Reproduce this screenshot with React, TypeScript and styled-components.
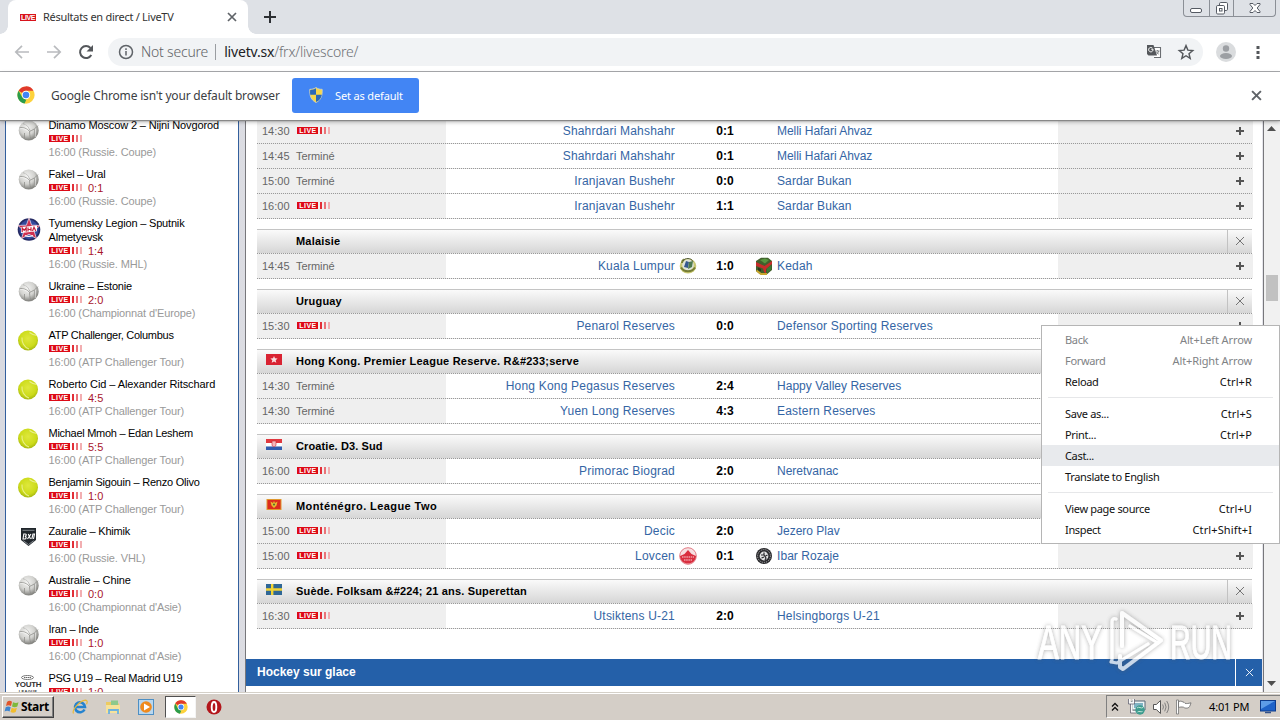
import React from 'react';
import styled, { createGlobalStyle } from 'styled-components';

const UI = `'Noto Sans', 'Open Sans', sans-serif`;
const ARIAL = `'Liberation Sans', Arial, sans-serif`;

const Global = createGlobalStyle`
  * { box-sizing: border-box; }
  html, body { margin: 0; padding: 0; }
  body { width: 1280px; height: 720px; overflow: hidden; background: #fff; }
  svg { display: block; flex: none; }
`;

/* ---------- data ---------- */

type Sport = 'volley' | 'tennis' | 'mhl' | 'vhl' | 'youth';
interface LiveEvent { icon: Sport; title: string; score?: string; meta: string; track?: number }

const events: LiveEvent[] = [
  { icon: 'volley', title: 'Dinamo Moscow 2 – Nijni Novgorod', meta: '16:00 (Russie. Coupe)', track: -0.14 },
  { icon: 'volley', title: 'Fakel – Ural', score: '0:1', meta: '16:00 (Russie. Coupe)', track: -0.2 },
  { icon: 'mhl', title: 'Tyumensky Legion – Sputnik Almetyevsk', score: '1:4', meta: '16:00 (Russie. MHL)', track: -0.18 },
  { icon: 'volley', title: 'Ukraine – Estonie', score: '2:0', meta: "16:00 (Championnat d'Europe)", track: -0.2 },
  { icon: 'tennis', title: 'ATP Challenger, Columbus', meta: '16:00 (ATP Challenger Tour)', track: -0.27 },
  { icon: 'tennis', title: 'Roberto Cid – Alexander Ritschard', score: '4:5', meta: '16:00 (ATP Challenger Tour)' },
  { icon: 'tennis', title: 'Michael Mmoh – Edan Leshem', score: '5:5', meta: '16:00 (ATP Challenger Tour)', track: -0.28 },
  { icon: 'tennis', title: 'Benjamin Sigouin – Renzo Olivo', score: '1:0', meta: '16:00 (ATP Challenger Tour)', track: -0.22 },
  { icon: 'vhl', title: 'Zauralie – Khimik', meta: '16:00 (Russie. VHL)', track: -0.2 },
  { icon: 'volley', title: 'Australie – Chine', score: '0:0', meta: "16:00 (Championnat d'Asie)" },
  { icon: 'volley', title: 'Iran – Inde', score: '1:0', meta: "16:00 (Championnat d'Asie)", track: -0.2 },
  { icon: 'youth', title: 'PSG U19 – Real Madrid U19', score: '1:0', meta: '16:00 (UEFA Youth League)', track: -0.3 },
];

type Crest = 'kl' | 'kedah' | 'lovcen' | 'ibar';
interface Match { time: string; live?: boolean; home: string; score: string; away: string; hc?: Crest; ac?: Crest; track?: number }
interface League { name?: string; track?: number; flag?: 'hk' | 'hr' | 'me' | 'se'; matches: Match[] }

const leagues: League[] = [
  {
    matches: [
      { time: '14:30', live: true, home: 'Shahrdari Mahshahr', score: '0:1', away: 'Melli Hafari Ahvaz', track: -0.04 },
      { time: '14:45', home: 'Shahrdari Mahshahr', score: '0:1', away: 'Melli Hafari Ahvaz', track: -0.04 },
      { time: '15:00', home: 'Iranjavan Bushehr', score: '0:0', away: 'Sardar Bukan', track: 0.1 },
      { time: '16:00', live: true, home: 'Iranjavan Bushehr', score: '1:1', away: 'Sardar Bukan', track: 0.1 },
    ],
  },
  { name: 'Malaisie', matches: [{ time: '14:45', home: 'Kuala Lumpur', score: '1:0', away: 'Kedah', hc: 'kl', ac: 'kedah' }] },
  { name: 'Uruguay', matches: [{ time: '15:30', live: true, home: 'Penarol Reserves', score: '0:0', away: 'Defensor Sporting Reserves' }] },
  {
    name: 'Hong Kong. Premier League Reserve. R&#233;serve',
    flag: 'hk',
    track: 0.22,
    matches: [
      { time: '14:30', home: 'Hong Kong Pegasus Reserves', score: '2:4', away: 'Happy Valley Reserves', track: 0.02 },
      { time: '14:30', home: 'Yuen Long Reserves', score: '4:3', away: 'Eastern Reserves' },
    ],
  },
  { name: 'Croatie. D3. Sud', flag: 'hr', track: 0.1, matches: [{ time: '16:00', live: true, home: 'Primorac Biograd', score: '2:0', away: 'Neretvanac', track: 0 }] },
  {
    name: 'Monténégro. League Two',
    flag: 'me',
    track: 0.42,
    matches: [
      { time: '15:00', live: true, home: 'Decic', score: '2:0', away: 'Jezero Plav', track: 0 },
      { time: '15:00', live: true, home: 'Lovcen', score: '0:1', away: 'Ibar Rozaje', hc: 'lovcen', ac: 'ibar', track: 0.06 },
    ],
  },
  { name: 'Suède. Folksam &#224; 21 ans. Superettan', flag: 'se', matches: [{ time: '16:30', live: true, home: 'Utsiktens U-21', score: '2:0', away: 'Helsingborgs U-21' }] },
];

const menu: ([string, string?, ('off' | 'hover')?] | null)[] = [
  ['Back', 'Alt+Left Arrow', 'off'],
  ['Forward', 'Alt+Right Arrow', 'off'],
  ['Reload', 'Ctrl+R'],
  null,
  ['Save as...', 'Ctrl+S'],
  ['Print...', 'Ctrl+P'],
  ['Cast...', undefined, 'hover'],
  ['Translate to English'],
  null,
  ['View page source', 'Ctrl+U'],
  ['Inspect', 'Ctrl+Shift+I'],
];

/* ---------- drawings ---------- */

const ChromeLogo = ({ size = 18 }: { size?: number }) => (
  <svg width={size} height={size} viewBox="0 0 24 24">
    <circle cx="12" cy="12" r="11.5" fill="#fdd23c" />
    <path d="M12 .5A11.5 11.5 0 0 1 22 6.3H12A5.8 5.8 0 0 0 7 9.2L2.1 6.2A11.5 11.5 0 0 1 12 .5Z" fill="#e0392c" />
    <path d="M2.1 6.2 7 15a5.8 5.8 0 0 0 5.6 2.8L10.2 23.4A11.5 11.5 0 0 1 2.1 6.2Z" fill="#2a9c4c" />
    <circle cx="12" cy="12" r="5.6" fill="#fff" />
    <circle cx="12" cy="12" r="4.4" fill="#4285f4" />
  </svg>
);

const Cross = ({ size, color, sw }: { size: number; color: string; sw: number }) => (
  <svg width={size} height={size} viewBox="0 0 10 10">
    <path d="M1 1 9 9M9 1 1 9" stroke={color} strokeWidth={sw} fill="none" />
  </svg>
);

const Plus = () => (
  <svg width="9" height="8" viewBox="0 0 9 8" shapeRendering="crispEdges">
    <path d="M0 3h8v2H0zM3 0h2v8H3z" fill="#555" />
  </svg>
);

const Volley = () => (
  <svg width="22" height="22" viewBox="0 0 22 22">
    <defs>
      <radialGradient id="vb" cx=".42" cy=".35" r=".62">
        <stop offset="0" stopColor="#f4f4f2" />
        <stop offset=".6" stopColor="#d2d2cf" />
        <stop offset="1" stopColor="#858581" />
      </radialGradient>
    </defs>
    <circle cx="10.7" cy="10.5" r="10" fill="url(#vb)" />
    <path
      d="M11.500 11.500C9 8.500 5.500 7 1.500 7.800M11.500 11.500c.3 4 .5 6.500 2 8.500M11.500 11.500c3-1.500 6.500-3 8.500-6M12 10.500c-1-3.500-3.500-6-7-7M6.500 13v6M16.500 9v9"
      stroke="#8f8f8b"
      strokeWidth=".8"
      fill="none"
    />
    <path d="M2 8.700c3.500-.8 6.500.5 8.800 3.200M5.500 3.500c3 1 5.200 3 6.300 6M17.300 8.500v8.500" stroke="#fff" strokeWidth=".7" fill="none" opacity=".8" />
  </svg>
);

const Tennis = () => (
  <svg width="22" height="22" viewBox="0 0 22 22">
    <defs>
      <radialGradient id="tb" cx=".5" cy=".4" r=".6">
        <stop offset="0" stopColor="#dfe83c" />
        <stop offset=".7" stopColor="#ccdb1a" />
        <stop offset="1" stopColor="#a5b60f" />
      </radialGradient>
    </defs>
    <circle cx="10" cy="10.500" r="10" fill="url(#tb)" />
    <path d="M4 7.500C3.500 12 6 17 11 19M11.500 2.500c2.500 2 5 2.800 7.500 3" stroke="#e9ef8c" strokeWidth="1.100" fill="none" />
  </svg>
);

const Mhl = () => (
  <svg width="24" height="24" viewBox="0 0 24 24">
    <circle cx="12" cy="12.500" r="11.300" fill="#252a63" />
    <circle cx="12" cy="12.500" r="9.700" fill="#33499c" />
    <path d="M12 .8l2.600 7.400 8.600.2-6.200 5.400 2.600 8-7.600-4.600-7.600 4.600 2.600-8L.8 8.400l8.600-.2Z" fill="#cf3050" stroke="#f3ecf5" strokeWidth=".7" />
    <path d="M4 10l16-1.500v5.800L4 16Z" fill="#fff" />
    <path d="M5.200 15v-4l2 2.400 2-2.600v4M11 14.500v-4M14 14.300v-4M11 12.500h3M15.500 14l1.500-3.800L18.800 14" stroke="#c3203c" strokeWidth="1.200" fill="none" />
    <path d="M8 18.500c2 1.200 5 1.200 8 0" stroke="#fff" strokeWidth="1.300" fill="none" />
  </svg>
);

const Vhl = () => (
  <svg width="18" height="20" viewBox="0 0 18 20">
    <path d="M1 1h15v12L8.500 19 1 13Z" fill="#20262b" />
    <path d="M2.500 3.300h12M3.300 13.700l5.200 3.800 5.200-3.800" stroke="#9aa1a6" strokeWidth=".8" fill="none" />
    <path d="M3 12l.8-5h1.500c1.400 0 1.200 2.400-.5 2.400 1.800 0 1.700 2.600 0 2.600ZM7.500 12l3.500-5M8.300 7l2.200 5M11.800 12l1.200-5h1.500l-1 5" stroke="#fff" strokeWidth="1.100" fill="none" />
  </svg>
);

const FlagArt = {
  hk: (
    <>
      <path fill="#d92332" d="M0 0h16v11H0z" />
      <path fill="#fff" d="M8 2l1 2.300 2.600.2-1.900 1.700.6 2.500L8 7.400 5.700 8.700l.6-2.500-1.900-1.700L7 4.300Z" opacity=".85" />
    </>
  ),
  hr: (
    <>
      <path fill="#e0393f" d="M0 0h16v4H0z" />
      <path fill="#fff" d="M0 4h16v3.500H0z" />
      <path fill="#2f5cae" d="M0 7.500h16V11H0z" />
      <path fill="#f6b8bb" stroke="#c22a36" strokeWidth=".6" d="M6 2h4v4.500L8 8 6 6.500Z" />
    </>
  ),
  me: (
    <>
      <path fill="#e0982e" d="M.5 0h15v11H.5z" />
      <path fill="#dc2b1e" d="M1.500 1h13v9h-13z" />
      <path fill="#e5bb30" d="M4.500 2.500 7 4l1-2 1 2 2.500-1.500-1 4L8 9 5.500 6.500Z" />
      <circle cx="8" cy="5.600" r="1" fill="#4d6b35" />
    </>
  ),
  se: (
    <>
      <path fill="#2f6796" d="M0 0h16v11H0z" />
      <path fill="#f3d433" d="M5 0h2.400v4.300H16v2.400H7.400V11H5V6.700H0V4.300h5z" />
    </>
  ),
};

const CrestArt = {
  kl: (
    <>
      <ellipse cx="9" cy="9" rx="8.300" ry="7.600" fill="#c9c873" />
      <circle cx="9" cy="8" r="5.800" fill="#dfe3da" />
      <path d="M5 10l2-6 3 1-1 6Z" fill="#35588f" />
      <path d="M10 5l4-1-1 6-4 2Z" fill="#4c7a50" />
      <path d="M2 10.500c3 5 11 5 14 0M3 6c0-2 1-3 2-3.500" stroke="#757d35" strokeWidth="2" fill="none" />
      <path d="M4 4c1-2 3-2.500 5-2.500s4 1 5 3" stroke="#555d3a" fill="none" />
    </>
  ),
  kedah: (
    <>
      <path d="M1 4 6 .8h7L17 4v9l-5 4.200H5L1 14Z" fill="#41602c" />
      <path d="M1 5 9.500 9 17 4v3l-6 5v4.500L9 15l-1-3.500L1 9Z" fill="#c62d2b" />
      <path d="M5 3l5-1.500L14 3l-4 3.500Z" fill="#579640" />
      <path d="M12 11.500l4-3v4l-4 3.500Z" fill="#3c7a35" />
      <path d="M1.500 13.500 6 17h6" stroke="#c8a52c" strokeWidth="1.800" fill="none" />
      <path d="M3 10.500l3 1.500v2.500l-3-1.500Z" fill="#2c351c" />
    </>
  ),
  lovcen: (
    <>
      <circle cx="9" cy="9" r="8.300" fill="#f7dfe1" stroke="#e27a83" />
      <path d="M1 9 5.500 7 9 3l3.500 4L17 9c-.5 10-15.500 10-16 0Z" fill="#d92f3f" />
      <path d="M3 10h12M5 13h8" stroke="#fbd6d9" strokeWidth="1.100" strokeDasharray="1.500 .7" />
    </>
  ),
  ibar: (
    <>
      <circle cx="9" cy="9" r="8" fill="#29292c" />
      <circle cx="9" cy="9" r="6.400" fill="none" stroke="#b9b9bb" strokeWidth=".9" strokeDasharray="1.200 1" />
      <circle cx="9" cy="9" r="4.400" fill="#e4e4e4" />
      <path d="M9 5.500v2.500L6 8M9 8l2 3-1 2M6.500 11l2.500-1M12.500 8 10.500 9" stroke="#29292c" strokeWidth="1.200" fill="none" />
    </>
  ),
};

const CrestIcon = ({ kind }: { kind: Crest }) => (
  <svg width="18" height="18" viewBox="0 0 18 18">{CrestArt[kind]}</svg>
);

/* ---------- shared ---------- */

const Badge = styled.span<{ $lift?: boolean }>`
  display: flex;
  align-items: center;
  gap: 2px;
  height: 7px;
  margin: 0 0 ${(p) => (p.$lift ? 2 : 0)}px 1px;
`;
const BadgeWord = styled.b`
  width: 21px;
  height: 7px;
  background: #dd0a16;
  color: #fff;
  font: 700 7px/7px ${ARIAL};
  letter-spacing: 0.5px;
  text-align: center;
  padding-left: 1px;
`;
const Bar = styled.i<{ $c: string }>`
  width: 2px;
  height: 7px;
  background: ${(p) => p.$c};
`;
const Live = ({ lift }: { lift?: boolean }) => (
  <Badge $lift={lift}>
    <BadgeWord>LIVE</BadgeWord>
    <Bar $c="#e22f38" />
    <Bar $c="#ea7378" />
    <Bar $c="#f2aeb1" />
  </Badge>
);

/* ---------- browser chrome ---------- */

const Screen = styled.div`
  position: relative;
  width: 1280px;
  height: 720px;
  display: flex;
  flex-direction: column;
  overflow: hidden;
  background: #fff;
  font-family: ${UI};
`;
const TabStrip = styled.header`
  height: 34px;
  flex: none;
  display: flex;
  align-items: flex-start;
  background: #dee1e6;
  padding: 0 4px 0 8px;
`;
const Tab = styled.div`
  position: relative;
  width: 240px;
  height: 34px;
  display: flex;
  align-items: center;
  padding: 0 11px 0 12px;
  background: #fff;
  border-radius: 8px 8px 0 0;
  &::before, &::after {
    content: '';
    position: absolute;
    bottom: 0;
    width: 8px;
    height: 8px;
  }
  &::before { left: -8px; background: radial-gradient(circle at 0 0, #dee1e6 7.5px, #fff 8px); }
  &::after { right: -8px; background: radial-gradient(circle at 100% 0, #dee1e6 7.5px, #fff 8px); }
`;
const Favicon = styled.b`
  width: 16px;
  height: 7px;
  background: #d8131c;
  color: #fff;
  font: 700 7px/7px ${ARIAL};
  letter-spacing: -0.4px;
  text-align: center;
`;
const TabTitle = styled.span`
  flex: 1;
  margin-left: 7px;
  font-size: 11px;
  line-height: 34px;
  letter-spacing: -0.28px;
  color: #333;
  white-space: nowrap;
`;
const NewTab = styled.div`
  padding: 11px 0 0 16px;
  flex: 1;
`;
const WinButtons = styled.div`
  display: flex;
  width: 93px;
  height: 17px;
  border: 1px solid #8b8f96;
  border-top: 0;
  border-radius: 0 0 4px 4px;
`;
const WinButton = styled.div<{ $w: number }>`
  width: ${(p) => p.$w}px;
  display: flex;
  justify-content: center;
  align-items: flex-start;
  & + & { border-left: 1px solid #8b8f96; }
`;
const Toolbar = styled.div`
  height: 38px;
  flex: none;
  display: flex;
  align-items: center;
  padding: 0 12px 2px 12px;
  border-bottom: 1px solid #a9abae;
`;
const NavIcons = styled.div`
  display: flex;
  align-items: center;
  gap: 12px;
  width: 96px;
`;
const Omnibox = styled.div`
  width: 1095px;
  height: 28px;
  display: flex;
  align-items: center;
  background: #f1f3f5;
  border-radius: 14px;
  padding: 0 8px 0 9px;
  font-size: 14px;
`;
const Security = styled.span`
  margin-left: 6px;
  color: #5f6266;
  font-weight: 300;
  letter-spacing: -0.2px;
`;
const Divider = styled.span`
  width: 1px;
  height: 16px;
  background: #9a9da1;
  margin: 0 8px 0 7px;
`;
const Url = styled.span`
  flex: 1;
  color: #202124;
  letter-spacing: -0.18px;
  span { color: #6d7074; font-weight: 300; }
`;
const OmniIcons = styled.div`
  display: flex;
  align-items: center;
  gap: 14px;
`;
const ToolbarEnd = styled.div`
  flex: 1;
  display: flex;
  align-items: center;
  justify-content: space-between;
  padding: 0 8px 0 13px;
`;
const InfoBar = styled.div`
  position: relative;
  z-index: 2;
  height: 48px;
  flex: none;
  display: flex;
  align-items: center;
  padding: 0 18px 2px 17px;
  background: #fff;
  box-shadow: 0 1px 1px #888, 0 2px 4px rgba(0, 0, 0, 0.3);
`;
const InfoText = styled.span`
  margin-left: 16px;
  width: 241px;
  font-size: 12px;
  letter-spacing: -0.18px;
  white-space: nowrap;
  color: #3c4043;
`;
const DefaultButton = styled.div`
  width: 127px;
  height: 35px;
  display: flex;
  align-items: center;
  gap: 12px;
  padding-left: 17px;
  border-radius: 3px;
  background: #4285f4;
  color: #fff;
  font-size: 11px;
  letter-spacing: -0.15px;
`;
const Spacer = styled.div`
  flex: 1;
`;

/* ---------- page ---------- */

const Page = styled.main`
  flex: 1;
  min-height: 0;
  display: flex;
  overflow: hidden;
  background: linear-gradient(90deg, #d9dae0, #e6e6ec);
`;
const Sidebar = styled.aside`
  width: 234px;
  margin-left: 5px;
  background: #fff;
  border: 1px solid #335f9d;
  border-width: 0 1px;
  overflow: hidden;
`;
const EventList = styled.div`
  margin-top: -2px;
  display: flex;
  flex-direction: column;
  gap: 8px;
`;
const EventItem = styled.div`
  display: flex;
  font-family: ${ARIAL};
`;
const EventIcon = styled.div`
  width: 42px;
  height: 26px;
  padding-left: 3px;
  display: flex;
  align-items: center;
  justify-content: center;
  flex: none;
`;
const EventBody = styled.div`
  width: 185px;
  min-width: 0;
`;
const EventTitle = styled.div<{ $track?: number }>`
  max-width: 178px;
  padding-left: 0.5px;
  font-size: 11px;
  line-height: 14px;
  letter-spacing: ${(p) => p.$track ?? -0.08}px;
  color: #000;
`;
const EventLive = styled.div`
  height: 13px;
  display: flex;
  align-items: center;
  gap: 6px;
  font-size: 11px;
  color: #a8152c;
`;
const EventMeta = styled.div`
  padding-left: 0.5px;
  font-size: 11px;
  line-height: 14px;
  letter-spacing: -0.12px;
  color: #999;
  white-space: nowrap;
`;
const YouthLogo = styled.div`
  align-self: flex-start;
  display: flex;
  flex-direction: column;
  align-items: center;
  padding-top: 4px;
  margin-left: -1px;
  color: #333;
`;
const YouthWord = styled.b`
  font: 700 8px/9px ${ARIAL};
  letter-spacing: -0.3px;
`;
const YouthSub = styled.b`
  font: 700 4px/5px ${ARIAL};
  letter-spacing: 0.3px;
`;
const Content = styled.section`
  width: 1017px;
  margin-left: 6px;
  border-left: 1px solid #77777b;
  background: #fff;
  overflow: hidden;
`;
const Table = styled.div`
  margin: -1px 10px 30px 11px;
  display: flex;
  flex-direction: column;
  gap: 10px;
`;
const DottedLine = styled.div`
  height: 1px;
  background-image: repeating-linear-gradient(90deg, #999 0 1px, #e9e9e9 1px 2px);
`;
const LeagueHead = styled.div`
  height: 24px;
  display: grid;
  grid-template-columns: 39px 1fr 25px;
  align-items: center;
  border-top: 1px solid #c4c4c4;
  background: linear-gradient(#fafafa, #d6d6d6);
  font: 700 11px/21px ${ARIAL};
  color: #000;
`;
const FlagCell = styled.div`
  padding: 0 0 4px 9px;
`;
const LeagueName = styled.span<{ $track?: number }>`
  letter-spacing: ${(p) => p.$track ?? 0.18}px;
  white-space: nowrap;
`;
const CloseCell = styled.div`
  height: 23px;
  display: flex;
  align-items: center;
  justify-content: center;
  padding-bottom: 2px;
  border-left: 1px solid #c2c2c2;
`;
const MatchRow = styled.div`
  height: 24px;
  display: grid;
  grid-template-columns: 189px 229px 25px 50px 27px 281px 195px;
  align-items: center;
  font: 12px/24px ${ARIAL};
`;
const GreyCell = styled.div<{ $end?: boolean }>`
  height: 24px;
  display: grid;
  grid-template-columns: ${(p) => (p.$end ? '1fr 17px' : '34px 1fr')};
  align-items: center;
  padding-left: 5px;
  background: #efefef;
  color: #666;
`;
const Time = styled.span`
  font-size: 11px;
`;
const Status = styled.span`
  font-size: 11px;
  letter-spacing: -0.1px;
`;
const Team = styled.span<{ $right?: boolean; $track?: number }>`
  text-align: ${(p) => (p.$right ? 'right' : 'left')};
  color: #3465a4;
  letter-spacing: ${(p) => p.$track ?? 0.2}px;
  white-space: nowrap;
`;
const ScoreText = styled.b`
  text-align: center;
  color: #000;
`;
const CrestCell = styled.span<{ $pad?: number }>`
  padding-left: ${(p) => p.$pad ?? 4}px;
`;
const SportBar = styled.div`
  height: 27px;
  display: flex;
  align-items: center;
  justify-content: space-between;
  padding-left: 11px;
  background: #2460a9;
  color: #fff;
  font: 700 12px/27px ${ARIAL};
`;
const SportClose = styled.div`
  width: 27px;
  height: 27px;
  display: flex;
  align-items: center;
  justify-content: center;
  border-left: 1px solid #fff;
`;
const Scroll = styled.div`
  width: 17px;
  margin-left: auto;
  display: flex;
  flex-direction: column;
  align-items: center;
  padding: 6px 1px 6px 0;
  border-left: 1px solid #77777b;
  background: #f1f1f1;
`;
const Thumb = styled.div`
  width: 12px;
  height: 26px;
  margin: 144px 0 auto;
  background: #c1c1c1;
`;

/* ---------- context menu ---------- */

const Menu = styled.div`
  position: absolute;
  z-index: 3;
  left: 1041px;
  top: 325px;
  width: 239px;
  height: 219px;
  padding: 3px 0;
  border: 1px solid #b5b5b5;
  background: #fff;
`;
const MenuItem = styled.div<{ $state?: 'off' | 'hover' }>`
  height: 21px;
  display: flex;
  justify-content: space-between;
  padding: 0 27px 0 23px;
  font-size: 11px;
  line-height: 21px;
  letter-spacing: -0.33px;
  color: ${(p) => (p.$state === 'off' ? '#808285' : '#111')};
  background: ${(p) => (p.$state === 'hover' ? '#e8eaed' : 'transparent')};
`;
const Shortcut = styled.span<{ $dim?: boolean }>`
  letter-spacing: ${(p) => (p.$dim ? -0.12 : 0.12)}px;
`;
const MenuLine = styled.div`
  height: 1px;
  margin: 5px 6px;
  background: #e6e7e9;
`;

const Watermark = styled.div`
  position: absolute;
  z-index: 4;
  left: 1030px;
  top: 604px;
  opacity: 0.75;
`;

/* ---------- taskbar ---------- */

const Taskbar = styled.footer`
  height: 28px;
  flex: none;
  display: flex;
  align-items: center;
  padding: 0 0 0 2px;
  background: #d4cec7;
  border-top: 1px solid #d4d0c8;
  box-shadow: inset 0 1px #fff;
  font-family: ${UI};
`;
const Start = styled.div`
  width: 52px;
  height: 22px;
  display: flex;
  align-items: center;
  gap: 1px;
  padding-left: 1px;
  border: 1px solid;
  border-color: #fff #404040 #404040 #fff;
  box-shadow: inset -1px -1px #808080;
  color: #000;
  font: 700 12px/18px ${UI};
  letter-spacing: -0.35px;
`;
const Quick = styled.div`
  display: flex;
  align-items: center;
  gap: 17px;
  padding: 0 9px 0 18px;
`;
const ActiveTask = styled.div`
  width: 31px;
  height: 22px;
  display: flex;
  align-items: center;
  justify-content: center;
  background: #fff;
  border: 1px solid;
  border-color: #505050 #f4f4f4 #f4f4f4 #505050;
  margin: 0 10px 0 2px;
`;
const Tray = styled.div`
  width: 174px;
  height: 23px;
  display: flex;
  align-items: center;
  padding-left: 4px;
  border: 1px solid;
  border-color: #808080 #fff #fff #808080;
  border-right: 0;
`;
const Clock = styled.span`
  width: 43px;
  margin: 0 8px 0 15px;
  font-size: 11px;
  letter-spacing: -0.15px;
  white-space: nowrap;
  color: #000;
`;

const eventIcon = (k: Sport) => {
  switch (k) {
    case 'volley': return <Volley />;
    case 'tennis': return <Tennis />;
    case 'mhl': return <Mhl />;
    case 'vhl': return <Vhl />;
    default:
      return (
        <YouthLogo>
          <svg width="13" height="5" viewBox="0 0 13 5">
            <ellipse cx="6.500" cy="2.500" rx="6" ry="2" fill="none" stroke="#777" />
            <path d="M3 2.500h7" stroke="#666" strokeDasharray="1.500 .5" />
          </svg>
          <YouthWord>YOUTH</YouthWord>
          <YouthSub>LEAGUE</YouthSub>
        </YouthLogo>
      );
  }
};

export default function App() {
  return (
    <Screen>
      <Global />
      <TabStrip>
        <Tab>
          <Favicon>LIVE</Favicon>
          <TabTitle>Résultats en direct / LiveTV</TabTitle>
          <Cross size={10} color="#5f6368" sw={1.7} />
        </Tab>
        <NewTab>
          <svg width="12" height="12" viewBox="0 0 12 12"><path d="M6 0v12M0 6h12" stroke="#2c2f33" strokeWidth="2" /></svg>
        </NewTab>
        <WinButtons>
          <WinButton $w={25}>
            <svg width="14" height="16" viewBox="0 0 14 16"><rect x="1.500" y="8.500" width="11" height="4" rx="1.500" fill="#fff" stroke="#555a63" /></svg>
          </WinButton>
          <WinButton $w={25}>
            <svg width="14" height="16" viewBox="0 0 14 16">
              <rect x="4.500" y="2.500" width="8" height="8" rx="1.200" fill="#fff" stroke="#555a63" />
              <rect x="1.500" y="5.500" width="8" height="8.500" rx="1.200" fill="#fff" stroke="#555a63" />
              <rect x="4.500" y="8.500" width="2.500" height="2.500" fill="#fff" stroke="#555a63" />
            </svg>
          </WinButton>
          <WinButton $w={42}>
            <svg width="14" height="16" viewBox="0 0 14 16">
              <path d="M2 3.500h3l2 2 2-2h3v1L9.200 8l2.800 3.500v1H9l-2-2-2 2H2v-1L4.800 8 2 4.500Z" fill="#fff" stroke="#555a63" />
            </svg>
          </WinButton>
        </WinButtons>
      </TabStrip>

      <Toolbar>
        <NavIcons>
          <svg width="20" height="20" viewBox="0 0 20 20"><path d="M17 10H4M10 3.800 3.800 10l6.200 6.200" stroke="#b9bbbe" strokeWidth="1.700" fill="none" /></svg>
          <svg width="20" height="20" viewBox="0 0 20 20"><path d="M3 10h13M10 3.800l6.200 6.200-6.200 6.200" stroke="#b9bbbe" strokeWidth="1.700" fill="none" /></svg>
          <svg width="20" height="20" viewBox="0 0 20 20">
            <path d="M15.300 13A6 6 0 1 1 14.500 6" stroke="#54575b" strokeWidth="2" fill="none" />
            <path d="M17 3v6.500h-6.500Z" fill="#54575b" />
          </svg>
        </NavIcons>
        <Omnibox>
          <svg width="18" height="18" viewBox="0 0 18 18">
            <circle cx="9" cy="9" r="6.500" fill="none" stroke="#5f6368" strokeWidth="1.500" />
            <path d="M9 8v4.500M9 5.300v1.600" stroke="#5f6368" strokeWidth="1.500" />
          </svg>
          <Security>Not secure</Security>
          <Divider />
          <Url>livetv.sx<span>/frx/livescore/</span></Url>
          <OmniIcons>
            <svg width="18" height="18" viewBox="0 0 18 18">
              <path d="M8.500 4.500h7v10H9" fill="#fff" stroke="#6b6e72" strokeWidth="1.100" />
              <path d="M2 2h6.500l3.500 10.500H3.500L2 11Z" fill="#54575b" />
              <path d="M8 6.200H6.200M8 6.200A2.200 2.200 0 1 1 7.300 5" stroke="#fff" strokeWidth="1" fill="none" />
              <path d="M10.800 8h3.700M12.600 7v1M13.800 8c-.4 1.500-1.300 2.600-2.300 3.200M11.500 9c.5 1 1.300 1.700 2.300 2.200" stroke="#6b6e72" strokeWidth=".8" fill="none" />
            </svg>
            <svg width="18" height="18" viewBox="0 0 24 24">
              <path d="M12 3.500l2.500 6 6.500.5-5 4.200 1.600 6.300L12 17l-5.600 3.500L8 14.200 3 10l6.500-.5Z" fill="none" stroke="#54575b" strokeWidth="1.900" />
            </svg>
          </OmniIcons>
        </Omnibox>
        <ToolbarEnd>
          <svg width="20" height="20" viewBox="0 0 20 20">
            <circle cx="10" cy="10" r="10" fill="#dadcde" />
            <circle cx="10" cy="6.500" r="3.200" fill="#9c9fa3" />
            <ellipse cx="10" cy="14" rx="6" ry="3" fill="#9c9fa3" />
          </svg>
          <svg width="4" height="14" viewBox="0 0 4 14">
            <path d="M.5 1h3v3h-3zM.5 6h3v3h-3zM.5 11h3v3h-3z" fill="#54575b" />
          </svg>
        </ToolbarEnd>
      </Toolbar>

      <InfoBar>
        <ChromeLogo size={18} />
        <InfoText>Google Chrome isn't your default browser</InfoText>
        <DefaultButton>
          <svg width="14" height="16" viewBox="0 0 14 16">
            <path d="M7 .5C5 2 3 2.300.8 2.300.5 9 2 13 7 15.500 12 13 13.500 9 13.200 2.300 11 2.300 9 2 7 .5Z" fill="#f7d74a" stroke="#cfd4c4" strokeWidth=".8" />
            <path d="M7 1.300v6.400H1.200C1 6 1 4.500 1.200 3 3 3 5.500 2.500 7 1.300ZM7 7.700h5.800C12.300 11 10.500 13.300 7 15Z" fill="#2c69b8" />
          </svg>
          Set as default
        </DefaultButton>
        <Spacer />
        <Cross size={11} color="#5f6368" sw={1.8} />
      </InfoBar>

      <Page>
        <Sidebar>
          <EventList>
            {events.map((e) => (
              <EventItem key={e.title}>
                <EventIcon>{eventIcon(e.icon)}</EventIcon>
                <EventBody>
                  <EventTitle $track={e.track}>{e.title}</EventTitle>
                  <EventLive><Live />{e.score}</EventLive>
                  <EventMeta>{e.meta}</EventMeta>
                </EventBody>
              </EventItem>
            ))}
          </EventList>
        </Sidebar>
        <Content>
          <Table>
            {leagues.map((l, i) => (
              <div key={i}>
                {l.name && (
                  <>
                    <LeagueHead>
                      <FlagCell>{l.flag && <svg width="16" height="11" viewBox="0 0 16 11">{FlagArt[l.flag]}</svg>}</FlagCell>
                      <LeagueName $track={l.track}>{l.name}</LeagueName>
                      <CloseCell><Cross size={10} color="#666" sw={0.9} /></CloseCell>
                    </LeagueHead>
                    <DottedLine />
                  </>
                )}
                {l.matches.map((m, j) => (
                  <React.Fragment key={j}>
                    <MatchRow>
                      <GreyCell>
                        <Time>{m.time}</Time>
                        {m.live ? <Live lift /> : <Status>Terminé</Status>}
                      </GreyCell>
                      <Team $right>{m.home}</Team>
                      <CrestCell>{m.hc && <CrestIcon kind={m.hc} />}</CrestCell>
                      <ScoreText>{m.score}</ScoreText>
                      <CrestCell $pad={5}>{m.ac && <CrestIcon kind={m.ac} />}</CrestCell>
                      <Team $track={m.track}>{m.away}</Team>
                      <GreyCell $end><span /><Plus /></GreyCell>
                    </MatchRow>
                    <DottedLine />
                  </React.Fragment>
                ))}
              </div>
            ))}
          </Table>
          <SportBar>
            Hockey sur glace
            <SportClose><Cross size={9} color="#fff" sw={1} /></SportClose>
          </SportBar>
        </Content>
        <Scroll>
          <svg width="9" height="5" viewBox="0 0 9 5"><path d="M0 5 4.500 0 9 5Z" fill="#505050" /></svg>
          <Thumb />
          <svg width="9" height="5" viewBox="0 0 9 5"><path d="M0 0 4.500 5 9 0Z" fill="#505050" /></svg>
        </Scroll>
      </Page>

      <Taskbar>
        <Start>
          <svg width="16" height="16" viewBox="0 0 16 16">
            <path d="M3 3c1.500-1.500 3.500-1.500 5-.3L7 7C5.500 6 3.500 6 2 7Z" fill="#e2562b" />
            <path d="M9 3.200c2 1 4 1 5.500 0L13.300 7.500c-1.500 1-3.500 1-5.300 0Z" fill="#7db93c" />
            <path d="M1.700 8.200c1.500-1 3.500-1 5 0L5.600 12.500c-1.500-1-3.500-1-5 0Z" fill="#3f86d0" />
            <path d="M7.700 8.700c1.700 1 3.500 1 5.200 0l-1.200 4.300c-1.500 1-3.500 1-5.200 0Z" fill="#f2bd2d" />
          </svg>
          Start
        </Start>
        <Quick>
          <svg width="16" height="16" viewBox="0 0 16 16">
            <path d="M12.500 10.500A5 5 0 1 1 13 8H4" stroke="#2583cf" strokeWidth="2.600" fill="none" />
            <path d="M1.500 14.500C-.5 11 8 1.500 13.500 1.200c2 0 2 2 1 4" stroke="#e8b93a" strokeWidth="1.200" fill="none" />
          </svg>
          <svg width="16" height="16" viewBox="0 0 16 16">
            <path d="M1 3h5l1 1.500h7V13H1Z" fill="#eccb62" />
            <path d="M6 1.500h7v6H6Z" fill="#8dc98c" />
            <path d="M1 6h14v8H1Z" fill="#f6e29a" />
            <path d="M4 15v-4h9v4" stroke="#6db2de" strokeWidth="1.800" fill="none" />
          </svg>
          <svg width="16" height="16" viewBox="0 0 16 16">
            <rect x=".5" y=".5" width="15" height="15" fill="#b9d7ee" stroke="#4d8fc4" />
            <circle cx="8" cy="8" r="5.800" fill="#ef8a1d" />
            <path d="M6 4.500v7L12 8Z" fill="#fff" />
          </svg>
        </Quick>
        <ActiveTask><ChromeLogo size={14} /></ActiveTask>
        <svg width="16" height="16" viewBox="0 0 16 16">
          <circle cx="8" cy="8" r="7.500" fill="#b3161b" />
          <ellipse cx="8" cy="8" rx="2.300" ry="5" fill="#b3161b" stroke="#fff" strokeWidth="1.900" />
        </svg>
        <Spacer />
        <Tray>
          <svg width="8" height="10" viewBox="0 0 8 10"><path d="M1 4.500 4 1.500l3 3M1 8.500l3-3 3 3" stroke="#111" strokeWidth="1.300" fill="none" /></svg>
          <svg width="33" height="18" viewBox="0 0 33 18">
            <path d="M13 3h13v9H13z" fill="#eef4f4" stroke="#567" />
            <path d="M15 5h9v5h-9z" fill="#7fb3c4" />
            <path d="M10.500 1v4h4V1M12.500 5v9h5" stroke="#f8f8f8" strokeWidth="2" fill="none" />
            <path d="M9.500 1v5h6V1M11.500 6v9h6" stroke="#556" strokeWidth=".7" fill="none" />
            <circle cx="21" cy="12" r="4.700" fill="#3d9c8f" />
            <path d="M18 10c2-2 4 1 6-.5M18.500 14c2-1.500 3 .5 5-.5" stroke="#bfe4d6" fill="none" />
          </svg>
          <svg width="18" height="16" viewBox="0 0 18 16">
            <path d="M1.500 5.500h2.800L8.500 1.500v13L4.300 10.500H1.500Z" fill="#fff" stroke="#555" />
            <path d="M10.700 5.500q1.500 2.500 0 5M12.700 3.700q2.800 4.300 0 8.600M14.700 2q4 6 0 12" stroke="#777" fill="none" strokeWidth=".9" />
          </svg>
          <svg width="24" height="18" viewBox="0 0 24 18">
            <path d="M6.500 2h2v14h-2z" fill="#fff" stroke="#666" strokeWidth=".7" />
            <path d="M8.500 3.500c3-1 4 .5 5.500.8l1 1c2 .5 3 .2 6-.5-1 3-1.500 5-3.500 5.200-2 .3-3 0-4-.8-2-.4-3-.2-5 .3Z" fill="#fff" stroke="#666" strokeWidth=".8" />
          </svg>
          <Clock>4:01 PM</Clock>
          <svg width="16" height="14" viewBox="0 0 16 14">
            <rect x=".5" y=".5" width="15" height="10.500" fill="#1f63c8" stroke="#0e3c8c" />
            <path d="M1 1h14L1 9Z" fill="#5d9ce8" />
            <path d="M5 12.500h6" stroke="#33518a" strokeWidth="1.500" />
          </svg>
        </Tray>
      </Taskbar>

      <Menu>
        {menu.map((m, i) =>
          m ? (
            <MenuItem key={i} $state={m[2]}>
              <span>{m[0]}</span>
              {m[1] && <Shortcut $dim={m[2] === 'off'}>{m[1]}</Shortcut>}
            </MenuItem>
          ) : (
            <MenuLine key={i} />
          ),
        )}
      </Menu>

      <Watermark>
        <svg width="212" height="72" viewBox="0 0 212 72">
          <defs>
            <filter id="sh" x="-10%" y="-10%" width="120%" height="120%">
              <feDropShadow dx="0" dy="0" stdDeviation="1.900" floodColor="#555" floodOpacity=".65" />
            </filter>
          </defs>
          <g filter="url(#sh)" fill="#fff" stroke="#fff" strokeWidth=".9" fontFamily="'Liberation Sans', Arial, sans-serif" fontSize="49">
            <text x="8" y="54.500" textLength="64" lengthAdjust="spacingAndGlyphs">ANY</text>
            <text x="140" y="54.500" textLength="62" lengthAdjust="spacingAndGlyphs">RUN</text>
            <g fill="none" strokeWidth="4" strokeLinejoin="round" strokeLinecap="round">
              <path d="M92 42V9l39 27.500L93 65l-3-2V52" />
              <path d="M86 15c-3-1-4 1-4 3v38l-1 2 6 1 31-19M100 22l28 17" strokeWidth="3.200" />
            </g>
          </g>
        </svg>
      </Watermark>
    </Screen>
  );
}
